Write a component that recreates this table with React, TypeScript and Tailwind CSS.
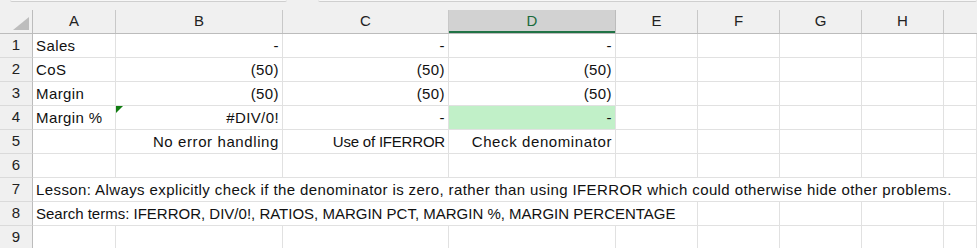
import * as React from "react"

type Cell = {
  text?: string
  align?: "left" | "right"
  span?: number
  fill?: boolean
  flag?: boolean
  track?: string
}

const COLS = ["A", "B", "C", "D", "E", "F", "G", "H", ""]
const COL_W = ["w-[83px]", "w-[167px]", "w-[166px]", "w-[167px]", "w-[82px]", "w-[82px]", "w-[82px]", "w-[82px]", "flex-1"]

const ROWS: Cell[][] = [
  [{ text: "Sales" }, { text: "-", align: "right" }, { text: "-", align: "right" }, { text: "-", align: "right" }, {}, {}, {}, {}, {}],
  [{ text: "CoS" }, { text: "(50)", align: "right" }, { text: "(50)", align: "right" }, { text: "(50)", align: "right" }, {}, {}, {}, {}, {}],
  [{ text: "Margin" }, { text: "(50)", align: "right" }, { text: "(50)", align: "right" }, { text: "(50)", align: "right" }, {}, {}, {}, {}, {}],
  [
    { text: "Margin %" },
    { text: "#DIV/0!", align: "right", flag: true },
    { text: "-", align: "right" },
    { text: "-", align: "right", fill: true },
    {}, {}, {}, {}, {},
  ],
  [
    {},
    { text: "No error handling", align: "right", track: "tracking-[0.6px]" },
    { text: "Use of IFERROR", align: "right", track: "tracking-[-0.2px]" },
    { text: "Check denominator", align: "right", track: "tracking-[0.6px]" },
    {}, {}, {}, {}, {},
  ],
  [{}, {}, {}, {}, {}, {}, {}, {}, {}],
  [
    {
      text: "Lesson: Always explicitly check if the denominator is zero, rather than using IFERROR which could otherwise hide other problems.",
      span: 9,
    },
  ],
  [
    {
      text: "Search terms: IFERROR, DIV/0!, RATIOS, MARGIN PCT, MARGIN %, MARGIN PERCENTAGE",
      span: 5,
      track: "tracking-[0px]",
    },
    {}, {}, {}, {},
  ],
  [{}, {}, {}, {}, {}, {}, {}, {}, {}],
]

// widths of the spanned cells, borders included
function spanWidth(start: number, span: number) {
  if (start + span >= COLS.length) return "flex-1"
  if (span === 5) return "w-[665px]"
  return COL_W[start]
}

function Row({ n, cells }: { n: number; cells: Cell[] }) {
  let col = 0
  return (
    <div className="flex h-[24px]">
      <div className="flex w-[33px] shrink-0 items-center justify-center border-r border-b border-r-[#bcbcbc] border-b-[#dadada] bg-[#f0f0f0] text-[15px] text-[#222]">
        {n}
      </div>
      {cells.map((c, i) => {
        const span = c.span ?? 1
        const w = span > 1 ? spanWidth(col, span) : COL_W[col]
        col += span
        return (
          <div
            key={i}
            className={`relative flex shrink-0 items-end overflow-visible whitespace-nowrap border-r border-b border-[#e1e1e1] px-[3px] pb-[1px] text-[15px] leading-[20px] text-[#111] ${w} ${
              c.track ?? "tracking-[0.4px]"
            } ${c.align === "right" ? "justify-end" : "justify-start"} ${c.fill ? "bg-[#c1f0c8]" : "bg-white"}`}
          >
            {c.flag && (
              <div className="absolute top-0 left-0 h-0 w-0 border-t-[7px] border-r-[7px] border-t-[#107c10] border-r-transparent" />
            )}
            {c.text}
          </div>
        )
      })}
    </div>
  )
}

export default function App() {
  return (
    <div
      className="h-[248px] w-[977px] overflow-hidden bg-white"
      style={{ fontFamily: '"Liberation Sans", Arial, sans-serif' }}
    >
      {/* strip under the name box and formula bar */}
      <div className="flex h-[10px] bg-[#f0f0f0]">
        <div className="ml-[10px] h-[2px] w-[277px] rounded-b-[3px] border-b border-[#cfcfcf] bg-[#f7f7f7]" />
        <div className="ml-[31px] h-[2px] flex-1 rounded-b-[3px] border-b border-[#cfcfcf] bg-[#f7f7f7]" />
      </div>

      {/* column letters */}
      <div className="flex h-[24px] border-b border-[#bcbcbc] bg-[#f0f0f0]">
        <div className="relative w-[33px] shrink-0 border-r border-[#bcbcbc]">
          <svg className="absolute top-[7px] left-[13px]" width="16" height="13" viewBox="0 0 16 13">
            <polygon points="16,0 16,13 0,13" fill="#bdbdbd" />
          </svg>
        </div>
        {COLS.map((c, i) => (
          <div
            key={i}
            className={`flex shrink-0 items-center justify-center border-r text-[15px] ${COL_W[i]} ${
              c === "D"
                ? "border-[#bcbcbc] bg-[#d2d2d2] text-[#1a6b3c] shadow-[inset_0_-2px_0_#217346]"
                : "border-[#c8c8c8] text-[#222]"
            } ${i === COLS.length - 1 ? "border-r-0" : ""}`}
          >
            {c}
          </div>
        ))}
      </div>

      {ROWS.map((cells, i) => (
        <Row key={i} n={i + 1} cells={cells} />
      ))}
    </div>
  )
}
